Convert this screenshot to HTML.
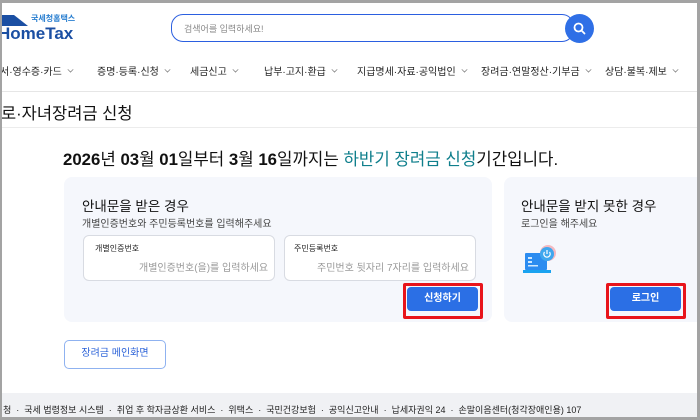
<!DOCTYPE html>
<html><head><meta charset="utf-8"><style>
*{margin:0;padding:0;box-sizing:border-box}
body{width:700px;height:420px;overflow:hidden;background:#a3a3a3;font-family:"Liberation Sans","Noto Sans CJK KR",sans-serif;position:relative}
#pg{position:absolute;left:2px;top:3px;width:695px;height:414px;background:#fff;overflow:hidden}
.a{position:absolute;white-space:nowrap}
.nav{font-size:10px;color:#222;top:60px}
.nav span{display:inline-block;width:7px;height:7px;border-right:1px solid #666;border-bottom:1px solid #666;transform:scale(.6) rotate(45deg);margin-left:5px;position:relative;top:-2px}
.card{position:absolute;background:#f5f7fc;border-radius:8px}
.inp{position:absolute;background:#fff;border:1px solid #d8dbe2;border-radius:6px;height:46px}
.btn{position:absolute;background:#2b6fe5;color:#fff;font-size:10px;font-weight:bold;border-radius:4px;text-align:center;line-height:23px}
.red{position:absolute;border:3px solid #e8141b;border-radius:2px}
</style></head><body><div id="pg">
<svg class="a" style="left:0;top:10px" width="30" height="14"><polygon points="0,2 12,2 26,13 0,13" fill="#1b4fa3"/></svg>
<div class="a" style="left:29px;top:10px;font-size:8px;color:#2a7fd0;font-weight:bold">국세청홈택스</div>
<div class="a" style="left:-4px;top:21px;font-size:17px;font-weight:bold;color:#1b4fa3">HomeTax</div>
<div class="a" style="left:169px;top:11px;width:403px;height:28px;border:1.5px solid #2b5fe0;border-radius:12px"></div>
<div class="a" style="left:182px;top:19px;font-size:9px;color:#888">검색어를 입력하세요!</div>
<div class="a" style="left:563px;top:11px;width:29px;height:29px;border-radius:50%;background:#2f6fe6"></div>
<svg class="a" style="left:570px;top:18px" width="15" height="15"><circle cx="6.5" cy="6.5" r="4" fill="none" stroke="#fff" stroke-width="1.8"/><line x1="9.5" y1="9.5" x2="12.5" y2="12.5" stroke="#fff" stroke-width="1.8" stroke-linecap="round"/></svg>
<div class="a nav" style="left:-2px">서·영수증·카드<span></span></div>
<div class="a nav" style="left:95px">증명·등록·신청<span></span></div>
<div class="a nav" style="left:188px">세금신고<span></span></div>
<div class="a nav" style="left:262px">납부·고지·환급<span></span></div>
<div class="a nav" style="left:355px">지급명세·자료·공익법인<span></span></div>
<div class="a nav" style="left:479px">장려금·연말정산·기부금<span></span></div>
<div class="a nav" style="left:603px">상담·불복·제보<span></span></div>
<div class="a" style="left:0;top:88px;width:695px;height:1px;background:#e6e6e6"></div>
<div class="a" style="left:-1px;top:97px;font-size:16.5px;color:#111">로·자녀장려금 신청</div>
<div class="a" style="left:0;top:124px;width:695px;height:1px;background:#ececec"></div>
<div class="a" style="left:61px;top:143px;font-size:16.8px;color:#111"><b>2026</b>년 <b>03</b>월 <b>01</b>일부터 <b>3</b>월 <b>16</b>일까지는 <span style="color:#0f7f8c">하반기 장려금 신청</span>기간입니다.</div>
<div class="card" style="left:62px;top:174px;width:428px;height:145px"></div>
<div class="a" style="left:80px;top:192px;font-size:13.5px;color:#111">안내문을 받은 경우</div>
<div class="a" style="left:80px;top:212px;font-size:10px;color:#444">개별인증번호와 주민등록번호를 입력해주세요</div>
<div class="inp" style="left:81px;top:232px;width:192px"></div>
<div class="a" style="left:93px;top:240px;font-size:8px;color:#222">개별인증번호</div>
<div class="a" style="left:137px;top:256px;font-size:10px;color:#999">개별인증번호(을)를 입력하세요</div>
<div class="inp" style="left:282px;top:232px;width:192px"></div>
<div class="a" style="left:292px;top:240px;font-size:8px;color:#222">주민등록번호</div>
<div class="a" style="left:315px;top:256px;font-size:10px;color:#999">주민번호 뒷자리 7자리를 입력하세요</div>
<div class="red" style="left:401px;top:280px;width:80px;height:36px"></div>
<div class="btn" style="left:405px;top:284px;width:71px;height:24px">신청하기</div>
<div class="card" style="left:502px;top:174px;width:200px;height:145px"></div>
<div class="a" style="left:519px;top:192px;font-size:13.5px;color:#111">안내문을 받지 못한 경우</div>
<div class="a" style="left:519px;top:212px;font-size:10px;color:#444">로그인을 해주세요</div>
<svg class="a" style="left:521px;top:242px" width="36" height="32"><rect x="2" y="8" width="22" height="17" rx="1" fill="#2c8cf0"/><rect x="0" y="25" width="28" height="3" fill="#1aa3f0"/><rect x="5" y="12" width="4" height="2" fill="#cfe8ff"/><rect x="5" y="16" width="4" height="2" fill="#cfe8ff"/><rect x="5" y="20" width="10" height="1.5" fill="#cfe8ff"/><circle cx="25" cy="8" r="8" fill="#f4b9c0"/><circle cx="24" cy="9" r="7" fill="#3fa7ee"/><path d="M21.5 7 a3.2 3.2 0 1 0 5 0" fill="none" stroke="#fff" stroke-width="1.2"/><line x1="24" y1="5" x2="24" y2="9" stroke="#fff" stroke-width="1.2"/></svg>
<div class="red" style="left:604px;top:280px;width:80px;height:36px"></div>
<div class="btn" style="left:608px;top:284px;width:71px;height:24px">로그인</div>
<div class="a" style="left:62px;top:337px;width:102px;height:29px;border:1.5px solid #8fb2f0;border-radius:5px;text-align:center;line-height:26px;font-size:10px;color:#2b62d8">장려금 메인화면</div>
<div class="a" style="left:0;top:390px;width:695px;height:26px;background:#f0f1f4"></div>
<div class="a" style="left:1px;top:400px;font-size:9px;color:#222">청 &nbsp;· &nbsp;국세 법령정보 시스템 &nbsp;· &nbsp;취업 후 학자금상환 서비스 &nbsp;· &nbsp;위택스 &nbsp;· &nbsp;국민건강보험 &nbsp;· &nbsp;공익신고안내 &nbsp;· &nbsp;납세자권익 24 &nbsp;· &nbsp;손말이음센터(청각장애인용) 107</div>
</div></body></html>
